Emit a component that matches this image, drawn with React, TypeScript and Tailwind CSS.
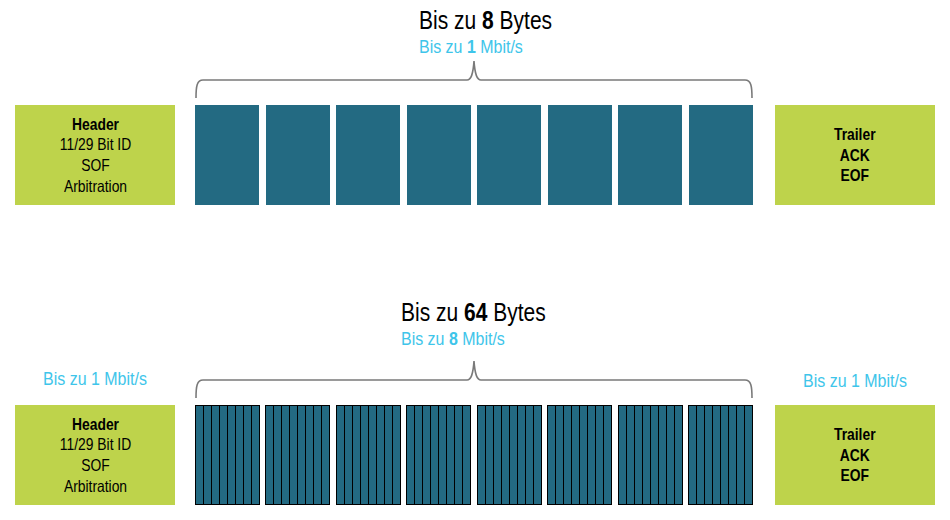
import React from 'react'

const font = { fontFamily: '"Liberation Sans Narrow", "Arial Narrow", "Liberation Sans", Arial, sans-serif' }

// no narrow face installed, so the text is squeezed horizontally
const narrow = 'scale-x-[0.84]'

const Brace = () => (
  <svg width="560" height="40" viewBox="0 0 560 40" className="block">
    <path
      d="M1 38 C1 26 2 20 8 20 L272 20 C276 20 278 15 279 1 C280 15 282 20 286 20 L550 20 C556 20 557 26 557 38"
      fill="none"
      stroke="#7a7a7a"
      strokeWidth="1.6"
    />
  </svg>
)

const SolidBlock = () => <div className="w-[64px] h-[100px] bg-[#236a82]" />

const StripedBlock = () => (
  <div className="w-[65px] h-[100px] flex border border-black bg-[#236a82]">
    {[0, 1, 2, 3, 4, 5, 6, 7].map((i) => (
      <div key={i} className={i === 0 ? 'flex-1' : 'flex-1 border-l border-black'} />
    ))}
  </div>
)

const HeaderBox = () => (
  <div className="w-[160px] h-[100px] bg-[#bed34b] flex items-center justify-center">
    <div className={`flex flex-col items-center text-[16.5px] leading-[20.7px] text-black ${narrow}`}>
      <span className="font-bold">Header</span>
      <span>11/29 Bit ID</span>
      <span>SOF</span>
      <span>Arbitration</span>
    </div>
  </div>
)

const TrailerBox = () => (
  <div className="w-[160px] h-[100px] bg-[#bed34b] flex items-center justify-center">
    <div className={`flex flex-col items-center text-[16.5px] leading-[20.5px] font-bold text-black ${narrow}`}>
      <span>Trailer</span>
      <span>ACK</span>
      <span>EOF</span>
    </div>
  </div>
)

const Title = ({ bytes, rate, indent }: { bytes: string; rate: string; indent: string }) => (
  <div className={indent}>
    <div className={`origin-left ${narrow}`}>
      <div className="text-[25px] leading-[30px] text-black whitespace-nowrap">
        Bis zu <b>{bytes}</b> Bytes
      </div>
      <div className="text-[19px] leading-[24px] text-[#3ec5ea] whitespace-nowrap">
        Bis zu <b>{rate}</b> Mbit/s
      </div>
    </div>
  </div>
)

const Rate = ({ pad }: { pad: string }) => (
  <div className={`${pad} text-[19px] leading-[24px] text-[#3ec5ea] text-center whitespace-nowrap ${narrow}`}>
    Bis zu 1 Mbit/s
  </div>
)

export default function App() {
  return (
    <div className="w-[950px] h-[520px] bg-white overflow-hidden" style={font}>
      {/* klassisches CAN */}
      <div className="pt-[5px]">
        <Title bytes="8" rate="1" indent="pl-[419px]" />
        <div className="mt-[1px] flex pl-[15px] gap-[20px]">
          <div className="flex flex-col">
            <div className="h-[45px]" />
            <HeaderBox />
          </div>
          <div className="flex flex-col">
            <Brace />
            <div className="mt-[5px] w-[558px] flex justify-between">
              {[0, 1, 2, 3, 4, 5, 6, 7].map((i) => (
                <SolidBlock key={i} />
              ))}
            </div>
          </div>
          <div className="flex flex-col">
            <div className="h-[45px]" />
            <TrailerBox />
          </div>
        </div>
      </div>

      {/* CAN FD */}
      <div className="mt-[92px]">
        <Title bytes="64" rate="8" indent="pl-[401px]" />
        <div className="mt-[9px] flex pl-[15px] gap-[20px]">
          <div className="flex flex-col">
            <div className="h-[45px]">
              <Rate pad="pt-[7px]" />
            </div>
            <HeaderBox />
          </div>
          <div className="flex flex-col">
            <Brace />
            <div className="mt-[5px] w-[558px] flex justify-between">
              {[0, 1, 2, 3, 4, 5, 6, 7].map((i) => (
                <StripedBlock key={i} />
              ))}
            </div>
          </div>
          <div className="flex flex-col">
            <div className="h-[45px]">
              <Rate pad="pt-[9px]" />
            </div>
            <TrailerBox />
          </div>
        </div>
      </div>
    </div>
  )
}
